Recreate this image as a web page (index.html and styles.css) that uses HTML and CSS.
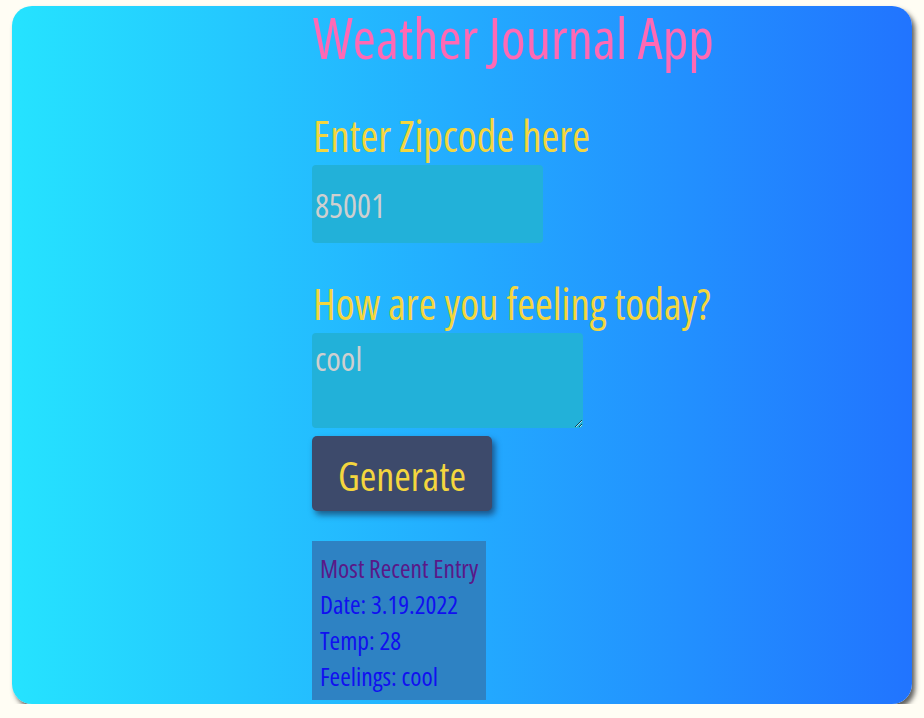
FILE: index.html
```html
<!DOCTYPE html>
<html lang="en">
<head>
<meta charset="utf-8">
<title>Weather Journal App</title>
<link rel="stylesheet" href="styles.css">
</head>
<body>
<div class="app">
  <main class="content">
    <h1 class="title">Weather Journal App</h1>
    <section class="field zip-field">
      <label class="label" for="zip">Enter Zipcode here</label>
      <input class="zip" id="zip" type="text" value="85001">
    </section>
    <section class="field feel-field">
      <label class="label" for="feelings">How are you feeling today?</label>
      <textarea class="feelings" id="feelings">cool</textarea>
    </section>
    <button class="generate" type="button">Generate</button>
    <div class="entry">
      <div class="entry-title">Most Recent Entry</div>
      <div class="entry-line">Date: 3.19.2022</div>
      <div class="entry-line">Temp: 28</div>
      <div class="entry-line">Feelings: cool</div>
    </div>
  </main>
</div>
</body>
</html>
```
FILE: styles.css
```css
html, body {
  margin: 0;
  padding: 0;
}
body {
  background: #fffdf4;
  font-family: "Open Sans", "Roboto Condensed", sans-serif;
  font-stretch: 75%;
  font-weight: 500;
}
.app {
  margin: 6px 0 0 12px;
  width: 900px;
  height: 698px;
  box-sizing: border-box;
  border-radius: 20px;
  background: linear-gradient(to right, #25e3ff 0%, #2174ff 100%);
  box-shadow: 3px 4px 5px rgba(40, 40, 40, 0.75);
  padding-left: 300px;
}
.content {
  display: flex;
  flex-direction: column;
  align-items: flex-start;
}
.title {
  margin: -7px 0 0;
  font-weight: 500;
  font-size: 56px;
  line-height: 76px;
  color: #ff69b4;
  padding-left: 1px;
  white-space: nowrap;
}
.field {
  display: flex;
  flex-direction: column;
  align-items: flex-start;
}
.zip-field {
  margin-top: 36px;
}
.feel-field {
  margin-top: 36px;
}
.label {
  font-size: 43px;
  line-height: 50px;
  color: #f4d63e;
  padding-left: 1px;
  margin-bottom: 4px;
  white-space: nowrap;
}
.zip, .feelings {
  border: none;
  outline: none;
  border-radius: 4px;
  background: #22b1d9;
  color: #cfcfcf;
  font-family: inherit;
  font-stretch: 75%;
  font-weight: 500;
  font-size: 33px;
  padding: 0 3px;
  box-sizing: border-box;
  margin: 0;
}
.zip {
  width: 231px;
  height: 78px;
  padding-top: 3px;
}
.feelings {
  width: 271px;
  height: 95px;
  padding-top: 8px;
  resize: both;
  line-height: 36px;
  display: block;
}
.generate {
  margin-top: 8px;
  width: 180px;
  height: 75px;
  border: none;
  border-radius: 5px;
  background: #3d4a6b;
  color: #f4d63e;
  font-family: inherit;
  font-stretch: 75%;
  font-weight: 500;
  font-size: 40px;
  padding: 3px 0 0;
  box-shadow: 3px 4px 6px rgba(20, 30, 60, 0.6);
}
.entry {
  margin-top: 30px;
  width: 174px;
  height: 159px;
  box-sizing: border-box;
  background: #2e82c3;
  padding: 9px 0 0 8px;
  font-size: 25.5px;
  line-height: 36px;
  white-space: nowrap;
}
.entry-title {
  color: #5a1888;
}
.entry-line {
  color: #1010f0;
}
```
